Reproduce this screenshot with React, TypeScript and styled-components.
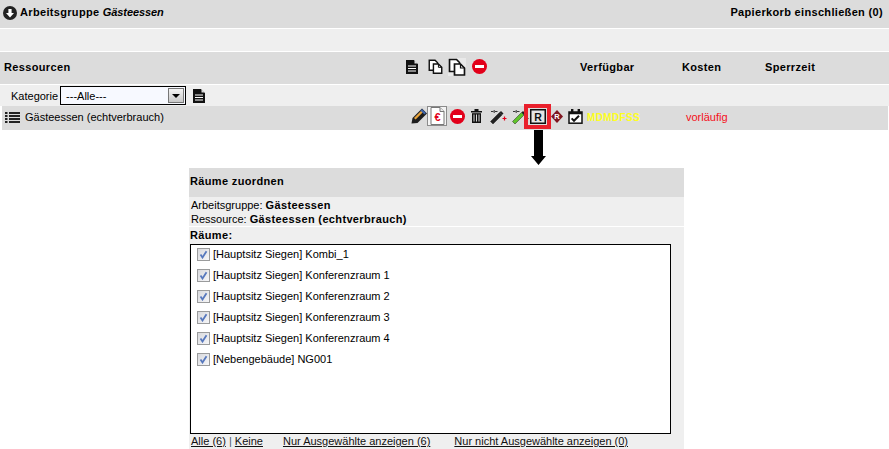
import React from "react";
import styled, { createGlobalStyle } from "styled-components";

const GlobalStyle = createGlobalStyle`
  html, body {
    margin: 0;
    padding: 0;
    background: #fff;
    height: 449px;
    overflow: hidden;
  }
  body {
    font-family: "Liberation Sans", Arial, sans-serif;
    font-size: 11px;
    color: #000;
  }
`;

const Page = styled.div`
  width: 889px;
  height: 449px;
  overflow: hidden;
  background: #fff;
`;

const TopBar = styled.div`
  height: 28px;
  margin-bottom: 1px;
  padding: 0 6px 5px 3px;
  display: flex;
  align-items: center;
  justify-content: space-between;
  background: #dcdcdc;
  font-weight: bold;
  box-sizing: border-box;
  letter-spacing: 0.33px;
`;

const TopTitle = styled.div`
  display: flex;
  align-items: center;
  gap: 3px;

  em {
    font-weight: bold;
    letter-spacing: -0.1px;
  }
`;

const TopIcon = styled.span`
  display: flex;
  margin-top: 3px;
`;

const EmptyBand = styled.div`
  height: 22px;
  margin-bottom: 1px;
  background: #efefef;
`;

const ColumnsBar = styled.div`
  height: 32px;
  margin-bottom: 1px;
  display: grid;
  grid-template-columns: 402px 174px 102px 83px 1fr;
  align-items: center;
  background: #dcdcdc;
  font-weight: bold;
  letter-spacing: 0.35px;
  box-sizing: border-box;
  padding: 0 0 3px 4px;
`;

const IconRow = styled.div`
  display: flex;
  align-items: center;
`;

const RowIcons = styled(IconRow)`
  margin-bottom: 2px;
`;

const FilterRow = styled.div`
  height: 21px;
  padding-left: 11px;
  display: flex;
  align-items: center;
  background: #efefef;
`;

const SelectBox = styled.div`
  width: 126px;
  height: 19px;
  margin-left: 2px;
  border: 1px solid #000;
  box-sizing: border-box;
  background: #f7f9ff;
  display: flex;
  align-items: center;
  justify-content: space-between;
  padding-left: 5px;
  padding-right: 1px;
`;

const SelectArrow = styled.div`
  width: 16px;
  height: 15px;
  box-sizing: border-box;
  background: linear-gradient(#f4f4f4, #c8c8c8);
  border: 1px solid #777;
  display: flex;
  align-items: center;
  justify-content: center;

  &::after {
    content: "";
    border-left: 4px solid transparent;
    border-right: 4px solid transparent;
    border-top: 4px solid #000;
  }
`;

const FilterIcon = styled.span`
  display: flex;
  margin-left: 7px;
`;

const ResourceRow = styled.div`
  height: 24px;
  margin: 0 1px 0 2px;
  display: grid;
  grid-template-columns: 408px 177px 99px 1fr;
  align-items: center;
  background: #dcdcdc;
  padding-bottom: 2px;
  box-sizing: border-box;
`;

const ResourceName = styled.div`
  display: flex;
  align-items: center;
  gap: 5px;
  padding-left: 3px;
`;

const IconSlot = styled.span<{ $width: number; $after?: number; $framed?: boolean }>`
  display: flex;
  align-items: center;
  justify-content: center;
  flex: none;
  width: ${(p) => p.$width}px;
  margin-right: ${(p) => p.$after ?? 0}px;
  height: 20px;
  box-sizing: border-box;
  ${(p) => (p.$framed ? "border: 1px solid #8b8b8b; background: #f4f4f4;" : "")}
`;

const MarkedSlot = styled(IconSlot)`
  position: relative;

  &::after {
    content: "";
    position: absolute;
    left: -5px;
    top: -2px;
    width: 27px;
    height: 25px;
    box-sizing: border-box;
    border: 4px solid #e9202c;
  }
`;

const Weekdays = styled.span`
  color: #ffff1e;
  font-size: 10px;
  font-weight: bold;
  letter-spacing: 0.35px;
`;

const Provisional = styled.span`
  color: #f5101a;
`;

const ArrowWrap = styled.div`
  height: 38px;
  padding-left: 531px;
  display: flex;
  align-items: flex-start;
`;

const Dialog = styled.section`
  width: 495px;
  height: 281px;
  margin-left: 189px;
  background: #efefef;
`;

const DialogHeader = styled.h2`
  height: 29px;
  margin: 0 0 1px;
  padding: 0 0 3px 1px;
  display: flex;
  align-items: center;
  background: #dcdcdc;
  font-size: 11px;
  font-weight: bold;
  letter-spacing: 0.35px;
  box-sizing: border-box;
`;

const InfoBlock = styled.div`
  height: 29px;
  padding: 0 0 0 2px;
  box-sizing: border-box;
  border-bottom: 1px solid #fff;
  line-height: 14px;

  b {
    letter-spacing: 0.35px;
  }
`;

const RoomsLabel = styled.div`
  height: 17px;
  padding-left: 1px;
  font-weight: bold;
  line-height: 16px;
  letter-spacing: 0.35px;
`;

const RoomList = styled.ul`
  width: 481px;
  height: 190px;
  margin: 0 0 0 1px;
  padding: 0 0 0 6px;
  box-sizing: border-box;
  list-style: none;
  background: #fff;
  border: 1px solid #000;
`;

const RoomItem = styled.li`
  height: 18px;
  margin-bottom: 3px;
  display: flex;
  align-items: center;
  gap: 3px;
`;

const CheckBox = styled.span`
  width: 13px;
  height: 13px;
  box-sizing: border-box;
  border: 1px solid #9a9b9c;
  background: linear-gradient(135deg, #d8d9dd, #f6f6f8);
  display: flex;
  align-items: center;
  justify-content: center;
`;

const FooterLinks = styled.div`
  display: flex;
  padding: 0 0 0 2px;
  line-height: 14px;
  color: #4a5a6a;

  a {
    color: #111;
    text-decoration: underline;
  }
`;

const LinkGroup = styled.span<{ $left: number }>`
  margin-left: ${(p) => p.$left}px;
`;

const PageIcon = () => (
  <svg width="12" height="14" viewBox="0 0 12 14">
    <path d="M0 0h8l4 4v10H0z" fill="#111" />
    <path d="M8.5 0v3.5H12z" fill="#dcdcdc" />
    <path d="M2 6h8M2 8.5h8M2 11h8" stroke="#fff" strokeWidth="1" />
  </svg>
);

const CopyIcon = ({ big }: { big?: boolean }) => (
  <svg width={big ? 18 : 15} height={big ? 18 : 15} viewBox="0 0 18 18">
    {big && <rect width="18" height="18" fill="#e9e9e9" />}
    <path d="M1.5 1.5h7l3 3v9h-10z" fill="#fff" stroke="#111" strokeWidth="1.7" />
    <path d="M6.5 6h6l4 4v7h-10z" fill="#fff" stroke="#111" strokeWidth="1.7" />
    <path d="M12.5 6v4h4" fill="none" stroke="#111" strokeWidth="1.2" />
  </svg>
);

const NoEntry = () => (
  <svg width="15" height="15" viewBox="0 0 15 15">
    <circle cx="7.5" cy="7.5" r="7.5" fill="#e2001a" />
    <rect x="3" y="6" width="9" height="3" fill="#fff" />
  </svg>
);

const CircleDown = () => (
  <svg width="14" height="14" viewBox="0 0 14 14">
    <circle cx="7" cy="7" r="7" fill="#222" />
    <path d="M7 11.4 3 7h2.4V3h3.2v4H11z" fill="#fff" />
  </svg>
);

const ListIcon = () => (
  <svg width="15" height="11" viewBox="0 0 15 11">
    <path
      d="M0 0h2.5v2H0zM4 0h11v2H4zM0 3h2.5v2H0zM4 3h11v2H4zM0 6h2.5v2H0zM4 6h11v2H4zM0 9h2.5v2H0zM4 9h11v2H4z"
      fill="#222"
    />
  </svg>
);

const PencilIcon = () => (
  <svg width="16" height="16" viewBox="0 0 16 16">
    <path d="M0.5 15.5l1-5.5L11 .5l5 5-9.5 9.5z" fill="#1d1d1d" />
    <path d="M3 10l7.5-7.5 1.6 1.6L4.6 11.6z" fill="#e8a33c" />
    <path d="M11 1l4 4-1.6 1.6-4-4z" fill="#3d63a8" />
  </svg>
);

const EuroPageIcon = () => (
  <svg width="15" height="18" viewBox="0 0 15 18">
    <path d="M1 .5h9l4 4v13H1z" fill="#fff" stroke="#777" />
    <path d="M10 .5v4h4" fill="#eee" stroke="#777" />
    <text
      x="7.5"
      y="14"
      textAnchor="middle"
      fontFamily="Liberation Sans, sans-serif"
      fontWeight="bold"
      fontSize="11"
      fill="#e2001a"
    >
      €
    </text>
  </svg>
);

const TrashIcon = () => (
  <svg width="11" height="14" viewBox="0 0 11 14">
    <path d="M0 2h11v1.6H0zM3.5 0h4v2h-4z" fill="#111" />
    <path d="M1 4.2h9V14H1z" fill="#111" />
    <path d="M3 5.5v7M5.5 5.5v7M8 5.5v7" stroke="#ddd" strokeWidth="1" />
  </svg>
);

const WandIcon = ({ color, plus }: { color: string; plus: string }) => (
  <svg width="18" height="15" viewBox="0 0 18 15">
    <path d="M1.5 12.5 10.5 3.5l2.5 2.5-9 9z" fill={color} stroke="#222" strokeWidth="0.5" />
    <path d="M10.5 3.5 12 2l2.5 2.5L13 6z" fill="#222" />
    <path d="M2 2.5h2.5M6 2.5h2.5M5.2 1v3" stroke="#222" strokeWidth="0.9" />
    <path d="M13.5 9.5h4M15.5 7.5v4" stroke={plus} strokeWidth="1.2" />
  </svg>
);

const RoomIcon = () => (
  <svg width="16" height="15" viewBox="0 0 16 15">
    <rect x="0.75" y="0.75" width="14.5" height="13.5" fill="#e6e6e6" stroke="#111" strokeWidth="1.5" />
    <text
      x="8"
      y="11.5"
      textAnchor="middle"
      fontFamily="Liberation Sans, sans-serif"
      fontWeight="bold"
      fontSize="10.5"
      fill="#111"
    >
      R
    </text>
  </svg>
);

const DiamondIcon = () => (
  <svg width="12" height="13" viewBox="0 0 12 13">
    <path d="M6 0l6 6.5L6 13 0 6.5z" fill="#7f1520" />
    <text
      x="6"
      y="9.4"
      textAnchor="middle"
      fontFamily="Liberation Sans, sans-serif"
      fontWeight="bold"
      fontSize="7.5"
      fill="#fff"
    >
      R
    </text>
  </svg>
);

const CalendarIcon = () => (
  <svg width="15" height="15" viewBox="0 0 15 15">
    <rect x="1" y="3" width="13" height="11.2" fill="#fff" stroke="#111" strokeWidth="1.5" />
    <path d="M1 3h13v2.2H1zM3 0h2.4v4H3zM9.6 0H12v4H9.6z" fill="#111" />
    <path d="M3.6 9.4l2.4 2.4 5-5" fill="none" stroke="#111" strokeWidth="2" />
  </svg>
);

const CheckMark = () => (
  <svg width="9" height="9" viewBox="0 0 9 9">
    <path d="M1.5 4.5 3.5 7.5 7.5 1.2" fill="none" stroke="#5778bd" strokeWidth="1.8" />
  </svg>
);

const DownArrow = () => (
  <svg width="15" height="35" viewBox="0 0 15 35">
    <path d="M3 0h9v26h3L7.5 35 0 26h3z" fill="#000" />
  </svg>
);

const rooms = [
  "[Hauptsitz Siegen] Kombi_1",
  "[Hauptsitz Siegen] Konferenzraum 1",
  "[Hauptsitz Siegen] Konferenzraum 2",
  "[Hauptsitz Siegen] Konferenzraum 3",
  "[Hauptsitz Siegen] Konferenzraum 4",
  "[Nebengebäude] NG001",
];

export default function App() {
  return (
    <Page>
      <GlobalStyle />
      <TopBar>
        <TopTitle>
          <TopIcon>
            <CircleDown />
          </TopIcon>
          <span>
            Arbeitsgruppe <em>Gästeessen</em>
          </span>
        </TopTitle>
        <span>Papierkorb einschließen (0)</span>
      </TopBar>
      <EmptyBand />
      <ColumnsBar>
        <span>Ressourcen</span>
        <IconRow>
          <IconSlot $width={12} $after={10}>
            <PageIcon />
          </IconSlot>
          <IconSlot $width={15} $after={5}>
            <CopyIcon />
          </IconSlot>
          <IconSlot $width={18} $after={6}>
            <CopyIcon big />
          </IconSlot>
          <IconSlot $width={15}>
            <NoEntry />
          </IconSlot>
        </IconRow>
        <span>Verfügbar</span>
        <span>Kosten</span>
        <span>Sperrzeit</span>
      </ColumnsBar>
      <FilterRow>
        Kategorie
        <SelectBox>
          ---Alle---
          <SelectArrow />
        </SelectBox>
        <FilterIcon>
          <PageIcon />
        </FilterIcon>
      </FilterRow>
      <ResourceRow>
        <ResourceName>
          <ListIcon />
          Gästeessen (echtverbrauch)
        </ResourceName>
        <RowIcons>
          <IconSlot $width={17}>
            <PencilIcon />
          </IconSlot>
          <IconSlot $width={20} $framed>
            <EuroPageIcon />
          </IconSlot>
          <IconSlot $width={20}>
            <NoEntry />
          </IconSlot>
          <IconSlot $width={19}>
            <TrashIcon />
          </IconSlot>
          <IconSlot $width={24}>
            <WandIcon color="#222" plus="#e2001a" />
          </IconSlot>
          <IconSlot $width={19}>
            <WandIcon color="#5fc42a" plus="#222" />
          </IconSlot>
          <MarkedSlot $width={17}>
            <RoomIcon />
          </MarkedSlot>
          <IconSlot $width={22}>
            <DiamondIcon />
          </IconSlot>
          <IconSlot $width={15}>
            <CalendarIcon />
          </IconSlot>
        </RowIcons>
        <Weekdays>MDMDFSS</Weekdays>
        <Provisional>vorläufig</Provisional>
      </ResourceRow>
      <ArrowWrap>
        <DownArrow />
      </ArrowWrap>
      <Dialog>
        <DialogHeader>Räume zuordnen</DialogHeader>
        <InfoBlock>
          Arbeitsgruppe: <b>Gästeessen</b>
          <br />
          Ressource: <b>Gästeessen (echtverbrauch)</b>
        </InfoBlock>
        <RoomsLabel>Räume:</RoomsLabel>
        <RoomList>
          {rooms.map((room) => (
            <RoomItem key={room}>
              <CheckBox>
                <CheckMark />
              </CheckBox>
              {room}
            </RoomItem>
          ))}
        </RoomList>
        <FooterLinks>
          <span>
            <a href="#alle">Alle (6)</a> | <a href="#keine">Keine</a>
          </span>
          <LinkGroup $left={20}>
            <a href="#nur">Nur Ausgewählte anzeigen (6)</a>
          </LinkGroup>
          <LinkGroup $left={24}>
            <a href="#nicht">Nur nicht Ausgewählte anzeigen (0)</a>
          </LinkGroup>
        </FooterLinks>
      </Dialog>
    </Page>
  );
}
